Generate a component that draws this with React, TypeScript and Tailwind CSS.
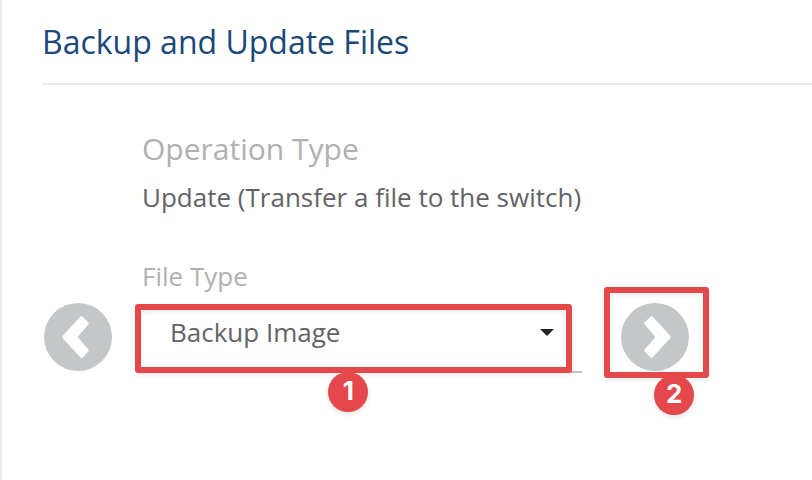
export default function App() {
  return (
    <div className="relative h-[480px] w-[812px] overflow-hidden border-l-2 border-[#ebebeb] bg-white pl-10 font-['Open_Sans',sans-serif]">
      <h1 className="h-[85px] border-b-2 border-[#ebebeb] pt-[20px] text-[32px] leading-[44px] text-[#1b4878]">Backup and Update Files</h1>
      <div className="pl-[100px]">
        <div className="pt-[44px] text-[30px] leading-[40px] text-[#b0b0b0]">Operation Type</div>
        <div className="pt-[10px] text-[26px] leading-[36px] text-[#626366]">Update (Transfer a file to the switch)</div>
        <div className="pt-[43px] text-[26px] leading-[36px] text-[#b0b0b0]">File Type</div>
      </div>
      <div className="flex pt-px">
        <Arrow className="ml-[2px] mt-2" />
        <div className="ml-[30px] flex h-[78px] w-[440px] items-start border-b-2 border-[#c4c4c4] pl-7 pt-[19px] text-[26px] leading-9 text-[#626366]">
          <span>Backup Image</span>
          <svg className="ml-auto mr-[28px] mt-[15px]" width="14" height="8" viewBox="0 0 14 8"><path d="M0 0H14L7 7Z" fill="#212226" /></svg>
        </div>
        <Arrow className="ml-[39px] mt-2 -scale-x-100" />
      </div>
      <div className="absolute left-[133px] top-[303.5px] h-[69px] w-[437px] rounded-[3px] border-[6px] border-[#e5484b] shadow-[0_2px_5px_rgba(0,0,0,0.08),inset_0_2px_5px_rgba(0,0,0,0.07)]" />
      <div className="absolute left-[602.4px] top-[287.4px] h-[90.6px] w-[104.5px] rounded-[3px] border-[6px] border-[#e5484b] shadow-[0_2px_5px_rgba(0,0,0,0.08),inset_0_2px_5px_rgba(0,0,0,0.07)]" />
      <Badge n="1" pos="left-[326.3px] top-[372px]" />
      <Badge n="2" pos="left-[652.3px] top-[375px]" />
    </div>
  );
}

function Arrow({ className }: { className: string }) {
  return (
    <svg className={className} width="68" height="68" viewBox="0 0 68 68">
      <circle cx="34" cy="34" r="34" fill="#c3c7c8" />
      <path d="M19.5 34L37.5 14.5L43.5 20.5L32 34L43.5 47.5L37.5 53.5Z" fill="#fff" stroke="#fff" strokeWidth="2.6" strokeLinejoin="round" />
    </svg>
  );
}

function Badge({ n, pos }: { n: string; pos: string }) {
  return (
    <div className={`absolute flex size-10 items-center justify-center rounded-full bg-[#e5484b] pb-[2px] font-[Inter] text-[26px] leading-none font-bold text-white shadow-[0_2px_5px_rgba(0,0,0,0.12)] ${pos}`}>{n}</div>
  );
}
